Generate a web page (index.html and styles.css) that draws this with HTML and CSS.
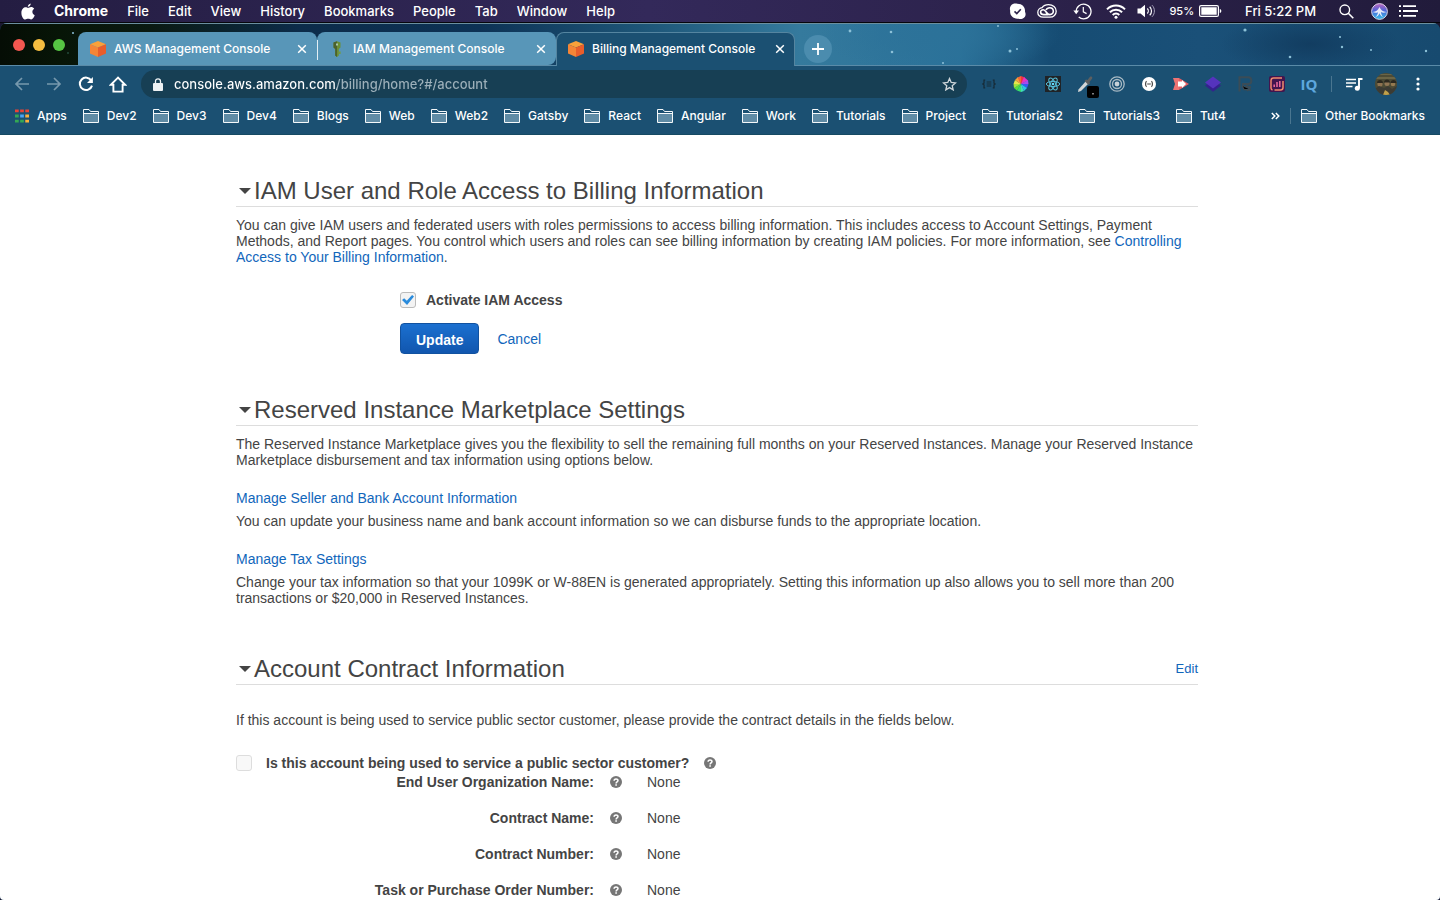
FILE: index.html
```html
<!DOCTYPE html>
<html lang="en">
<head>
<meta charset="utf-8">
<title>Billing Management Console</title>
<link rel="stylesheet" href="styles.css">
</head>
<body>
<svg class="defs" aria-hidden="true">
  <symbol id="folder" viewBox="0 0 16 14"><path d="M1 4.500h14v8.500H1z" fill="#5f8ba5"/><path d="M.5 13.500V.5h5.500l1.500 2h8v11z" fill="none" stroke="#f4f8fa"/><path d="M1 4.500h14" stroke="#f4f8fa"/></symbol>
  <symbol id="cube" viewBox="0 0 16 16"><path d="M8 0l8 3.200L8 6.600 0 3.200z" fill="#f9a13a"/><path d="M0 3.200l8 3.400V16l-8-3.400z" fill="#f58536"/><path d="M16 3.200L8 6.600V16l8-3.400z" fill="#e95d2b"/></symbol>
  <symbol id="close" viewBox="0 0 10 10"><path d="M1.200 1.200l7.600 7.600M8.800 1.200L1.200 8.800" stroke="#fff" stroke-width="1.500" fill="none"/></symbol>
  <symbol id="help" viewBox="0 0 12 12"><circle cx="6" cy="6" r="6" fill="#767676"/><path d="M4.100 4.700c0-2.400 3.900-2.300 3.900-.1C8 6 6.100 5.900 6.100 7.400" fill="none" stroke="#fff" stroke-width="1.500"/><path d="M5.300 8.300h1.600v1.500H5.300z" fill="#fff"/></symbol>
</svg>

<header class="menubar">
  <nav class="menus" aria-label="Menu bar">
    <button class="menu apple" aria-label="Apple"><svg width="14" height="17" viewBox="0 0 14 17"><path d="M9.700.4C9.800 2 8.400 3.900 6.800 3.800 6.600 2.200 8.200.6 9.700.4z" fill="#fff"/><path d="M7 4.900c.8 0 1.700-.8 3.100-.8 1.200 0 2.400.6 3.100 1.700-2.700 1.500-2.300 5.300.5 6.400-.6 1.700-2 4.300-3.500 4.300-1.200 0-1.600-.7-3-.7s-1.800.7-3 .7C2.400 16.500.4 13.200.4 9.900c0-3.700 2.300-5.600 4.300-5.600 1 0 1.800.6 2.300.6z" fill="#fff"/></svg></button>
    <button class="menu app">Chrome</button>
    <button class="menu">File</button>
    <button class="menu">Edit</button>
    <button class="menu">View</button>
    <button class="menu">History</button>
    <button class="menu">Bookmarks</button>
    <button class="menu">People</button>
    <button class="menu">Tab</button>
    <button class="menu">Window</button>
    <button class="menu">Help</button>
  </nav>
  <div class="status">
    <svg width="17" height="17" viewBox="0 0 17 17"><path d="M4.500.8C6 .3 7.500.8 8.500.8c5 0 8 3.700 7.500 8 1 2 .8 4.500-1 6-1.600 1.500-4 1.600-5.500.9-5.600.6-9-3.500-8.300-8C.2 5 1.500 1.700 4.500.8z" fill="#fff"/><path d="M5.500 8.300l2.300 2.200 4-4.300" fill="none" stroke="#2c234c" stroke-width="1.600"/></svg>
    <svg width="20" height="14" viewBox="0 0 20 14"><path d="M6.300 13.200C2.800 13.200.8 11 .8 8.400c0-2.600 2-4.500 4.300-4.700C6.700 1.400 9 .7 11.500.7c4.500 0 7.700 2.800 7.700 6.500 0 3.500-2.700 6-6.200 6z" fill="none" stroke="#fff" stroke-width="1.300"/><path d="M11.500 10.600H6.800c-4.200 0-4.200-4.900-.5-4.900 2.700 0 3.200 4.900 6.500 4.900 4.800 0 4.600-6.900 0-6.900-2 0-3.200 1-3.800 2.300M9 8.200c.9 1.400 1.900 2.400 3.600 2.400" fill="none" stroke="#fff" stroke-width="1.600"/></svg>
    <svg class="history" width="19" height="17" viewBox="0 0 19 17"><path d="M3.200 8.500A7.400 7.400 0 1 1 5.700 14" fill="none" stroke="#fff" stroke-width="1.300"/><path d="M.4 7.500h5.600l-2.800 3.800z" fill="#fff"/><path d="M10.300 4v4.800l3.300 1.800" fill="none" stroke="#fff" stroke-width="1.200"/></svg>
    <svg width="20" height="15" viewBox="0 0 20 15"><path d="M1 5.400a12.500 12.500 0 0 1 18 0M3.900 8.300a8.500 8.500 0 0 1 12.200 0M6.700 11a4.600 4.600 0 0 1 6.600 0" fill="none" stroke="#fff" stroke-width="2"/><circle cx="10" cy="13.300" r="1.500" fill="#fff"/></svg>
    <svg width="18" height="14" viewBox="0 0 18 14"><path d="M.5 4.500h3L8 .8v12.400L3.500 9.500h-3z" fill="#fff"/><path d="M10.300 4.500c1.300 1.300 1.300 3.700 0 5M12.700 2.700c2.400 2.300 2.400 6.300 0 8.600" fill="none" stroke="#fff" stroke-width="1.200"/><path d="M15 1.200c3.200 3.100 3.200 8.500 0 11.600" fill="none" stroke="#a9a4bd" stroke-width="1"/></svg>
    <span class="battery">95% <svg width="23" height="12" viewBox="0 0 23 12"><rect x=".6" y=".6" width="18.800" height="10.800" rx="1.500" fill="none" stroke="#fff" stroke-width="1.200"/><path d="M2.300 2.300h15.400v7.400H2.300zM20.800 4c2 .4 2 3.600 0 4z" fill="#fff"/></svg></span>
    <time class="clock">Fri 5:22 PM</time>
    <svg class="search" width="15" height="15" viewBox="0 0 15 15"><circle cx="5.800" cy="5.800" r="4.800" fill="none" stroke="#fff" stroke-width="1.400"/><path d="M9.300 9.300l5 5" stroke="#fff" stroke-width="1.600"/></svg>
    <svg width="17" height="17" viewBox="0 0 17 17"><defs><linearGradient id="siri" x2="0" y2="1"><stop stop-color="#bd64bd"/><stop offset=".45" stop-color="#4c65d8"/><stop offset="1" stop-color="#36bfe9"/></linearGradient></defs><circle cx="8.500" cy="8.500" r="7.900" fill="url(#siri)" stroke="#d8d2e6"/><path d="M1.500 9c4-.3 5.500-2 7-5 1.300 3 3 4.700 7 5-2.500 1-4.300.7-5.600 0 .4 2.200.9 3.600 2.100 5.200-1.700-.9-2.900-2.200-3.500-4-.7 1.800-2 3.200-4 4C6 12.500 6.800 11 7 9.200 5.600 10 3.800 10 1.500 9z" fill="#fff" fill-opacity=".85"/></svg>
    <svg width="19" height="12" viewBox="0 0 19 12"><path d="M4 1.200h13M4 6h15M4 10.800h13" stroke="#fff" stroke-width="1.800"/><path d="M0 1.200h2M0 6h2M0 10.800h2" stroke="#fff" stroke-width="1.800"/></svg>
  </div>
</header>

<div class="window">
  <div class="tabstrip">
    <svg class="stars" width="1440" height="41" viewBox="0 0 1440 41" aria-hidden="true"><g fill="#8cc1d8"><circle cx="850" cy="7" r="1.400"/><circle cx="891" cy="8" r="1.300"/><circle cx="892" cy="28" r="1.300"/><circle cx="998" cy="2" r="1"/><circle cx="943" cy="39" r="1"/><circle cx="1010" cy="27" r="1.500"/><circle cx="1017" cy="25" r="1"/><circle cx="1245" cy="6" r="1.600"/><circle cx="1290" cy="33" r="1.300"/><circle cx="1340" cy="13" r="1.100"/><circle cx="1342" cy="23" r="1.200"/><circle cx="1371" cy="26" r="1"/><circle cx="1426" cy="27" r="1.200"/><circle cx="73" cy="9" r="1"/></g><circle cx="68" cy="29" r="1" fill="#234a3a"/></svg>
    <div class="lights"><button class="light red" aria-label="Close window"></button><button class="light amber" aria-label="Minimize window"></button><button class="light green" aria-label="Zoom window"></button></div>
    <div class="tab"><svg width="16" height="16"><use href="#cube"/></svg><button class="tab-title">AWS Management Console</button><button class="tab-close" aria-label="Close tab"><svg width="10" height="10"><use href="#close"/></svg></button></div>
    <div class="tab divided"><svg width="16" height="16" viewBox="0 0 16 16"><path d="M4.500 1.500L8 .3l3.500 1.200v5L9.800 8v6.500L8 16l-1.800-1.500V8L4.500 6.500z" fill="#6b8f35"/><path d="M4.500 1.500L8 .3V16l-1.800-1.500V8L4.500 6.500z" fill="#4b612c"/><path d="M7 2.500h2v2H7z" fill="#a7c5ae"/><path d="M9.800 10.500h1.800V13H9.800z" fill="#759c3e"/></svg><button class="tab-title">IAM Management Console</button><button class="tab-close" aria-label="Close tab"><svg width="10" height="10"><use href="#close"/></svg></button></div>
    <div class="tab active"><svg width="16" height="16"><use href="#cube"/></svg><button class="tab-title">Billing Management Console</button><button class="tab-close" aria-label="Close tab"><svg width="10" height="10"><use href="#close"/></svg></button></div>
    <button class="newtab" aria-label="New tab"><svg width="12" height="12" viewBox="0 0 12 12"><path d="M6 0v12M0 6h12" stroke="#fff" stroke-width="1.800"/></svg></button>
  </div>

  <div class="toolbar">
    <button class="tool" aria-label="Back"><svg width="16" height="14" viewBox="0 0 16 14"><path d="M15 7H2M8 1L2 7l6 6" fill="none" stroke="#7799ad" stroke-width="1.700"/></svg></button>
    <button class="tool" aria-label="Forward"><svg width="16" height="14" viewBox="0 0 16 14"><path d="M1 7h13M8 1l6 6-6 6" fill="none" stroke="#7799ad" stroke-width="1.700"/></svg></button>
    <button class="tool" aria-label="Reload"><svg width="16" height="16" viewBox="0 0 16 16"><path d="M13.300 4.500A6.200 6.200 0 1 0 14 9.600" fill="none" stroke="#fff" stroke-width="2"/><path d="M14.900 1v6H9z" fill="#fff"/></svg></button>
    <button class="tool" aria-label="Home"><svg width="18" height="17" viewBox="0 0 18 17"><path d="M9 1.600L1.800 8.800h2.600v6.800h9.200V8.800h2.600z" fill="none" stroke="#fff" stroke-width="1.900"/></svg></button>
    <div class="omnibox">
      <svg width="10" height="13" viewBox="0 0 10 13"><path d="M1 5h8a1 1 0 0 1 1 1v6a1 1 0 0 1-1 1H1a1 1 0 0 1-1-1V6a1 1 0 0 1 1-1z" fill="#eef2f4"/><path d="M2.500 5.500V3.300a2.500 2.500 0 0 1 5 0v2.200" fill="none" stroke="#eef2f4" stroke-width="1.300"/></svg>
      <input class="url" type="text" aria-label="Address" value="console.aws.amazon.com/billing/home?#/account">
      <button class="star" aria-label="Bookmark this page"><svg width="15" height="14" viewBox="0 0 15 14"><path d="M7.500 1.500l1.700 4 4.300.4-3.300 2.800 1 4.200-3.700-2.300-3.700 2.300 1-4.200L1.500 5.900l4.300-.4z" fill="none" stroke="#cfd6da" stroke-width="1.300"/></svg></button>
    </div>
    <button class="tool" aria-label="JSON extension"><svg width="14" height="10" viewBox="0 0 14 10"><path d="M3.200 1.200H2v3L.8 5 2 5.800v3h1.200M10.800 1.200H12v3l1.200.8-1.200.8v3h-1.200" fill="none" stroke="#172c39" stroke-width="1.300"/><path d="M4.700 3h4.600M4.700 5h4.600M4.700 7h4.600" stroke="#172c39" stroke-width="1"/></svg></button>
    <button class="tool" aria-label="Color wheel"><svg width="16" height="16" viewBox="0 0 16 16"><path d="M8 8V0l4 1.500z" fill="#ef3340"/><path d="M8 8l3-7 4 3.500z" fill="#e533c6"/><path d="M8 8l7-4 .5 4z" fill="#a64cf0"/><path d="M8 8h7.500l-1.500 4z" fill="#395af0"/><path d="M8 8l6 4-3 3z" fill="#2dc4e8"/><path d="M8 8l3 7-3 1z" fill="#42dfb7"/><path d="M8 8v8l-4-1.500z" fill="#39dd6c"/><path d="M8 8l-4 6.500L1 12z" fill="#56df3f"/><path d="M8 8l-7 4-.5-4z" fill="#a3e33d"/><path d="M8 8H.5L2 4z" fill="#e8e44b"/><path d="M8 8L2 4l3-3z" fill="#f6a13b"/><path d="M8 8L4.500 1.500 8 0z" fill="#f56734"/></svg></button>
    <button class="tool" aria-label="React tools"><svg width="16" height="16" viewBox="0 0 16 16"><path d="M0 0h16v16H0z" fill="#202326"/><g fill="none" stroke="#56bfda"><ellipse cx="8" cy="8" rx="6.700" ry="2.600"/><ellipse cx="8" cy="8" rx="6.700" ry="2.600" transform="rotate(60 8 8)"/><ellipse cx="8" cy="8" rx="6.700" ry="2.600" transform="rotate(120 8 8)"/></g><circle cx="8" cy="8" r="1.300" fill="#61dafb"/></svg></button>
    <button class="tool picker" aria-label="Color picker"><svg width="22" height="22" viewBox="0 0 22 22"><path d="M1.500 13.500L9 5l2.500 2.500L4 15l-3 1z" fill="#d4d6d6"/><path d="M9 3.500l1.500.5L13 .8c1.500-1 3 .5 2 2L12.500 6l.5 1.500-1.500 1.500-4-4z" fill="#5d5f60"/><rect x="10" y="10" width="12" height="12" rx="2" fill="#000"/><path d="M15.500 17h1v1.500h-1z" fill="#fff"/></svg></button>
    <button class="tool" aria-label="Target"><svg width="16" height="16" viewBox="0 0 16 16"><g fill="none" stroke="#a9bac4" stroke-width="1.300"><circle cx="8" cy="8" r="7.200"/><circle cx="8" cy="8" r="4.500"/></g><circle cx="8" cy="8" r="2.400" fill="#c8d2d8"/></svg></button>
    <button class="tool" aria-label="Formatter"><svg width="14" height="14" viewBox="0 0 14 14"><circle cx="7" cy="7" r="7" fill="#fff"/><path d="M4.700 4.200c-1.500.5-1.500 5.100 0 5.600M9.300 4.200c1.500.5 1.500 5.100 0 5.600M5.200 7h3.600" stroke="#444" stroke-width="1.200" fill="none"/></svg></button>
    <button class="tool" aria-label="Recorder"><svg width="16" height="12" viewBox="0 0 16 12"><path d="M0 0h6v12H0l2-6z" fill="#ee7373"/><path d="M6 0l10 6-10 6z" fill="#e65f64"/><path d="M5 3.500h4V2l4 4-4 4V8.500H5z" fill="#fff"/></svg></button>
    <button class="tool" aria-label="Layers"><svg width="16" height="16" viewBox="0 0 16 16"><path d="M0 9.500l8 6.300 8-6.300-8-5z" fill="#35218e"/><path d="M0 6.500L8 .5l8 6-8 6z" fill="#5533bd"/></svg></button>
    <button class="tool" aria-label="Cart"><svg width="15" height="16" viewBox="0 0 15 16"><path d="M1.500 15.500V1.300h8.700c4.200 0 4.200 6.700 0 6.700H5v3h8" fill="none" stroke="#3a4c57" stroke-width="2"/><path d="M4 10l2 3.500 7 .5M8 8l4 5M12.500 11L9 15" stroke="#3a4c57" stroke-width="1.500"/></svg></button>
    <button class="tool" aria-label="Analytics"><svg width="16" height="16" viewBox="0 0 16 16"><rect width="16" height="16" rx="2" fill="#42154f"/><path d="M3.500 14A2 2 0 0 1 2 12V4.500A2.500 2.500 0 0 1 4.500 2H13M14 5v6.500a2.500 2.500 0 0 1-2.500 2.500H5.500" fill="none" stroke="#f18a6c" stroke-width="1.500"/><path d="M5.200 11V8.500M8 11V6M10.800 11V5" stroke="#ee6b9d" stroke-width="1.500"/></svg></button>
    <button class="tool iq">IQ</button>
    <span class="rule"></span>
    <button class="tool" aria-label="Media controls"><svg width="17" height="13" viewBox="0 0 17 13"><path d="M0 1.500h10M0 5h10M0 8.500h6.500" stroke="#fff" stroke-width="1.700"/><path d="M13 10V1h3.500" stroke="#fff" stroke-width="1.900" fill="none"/><circle cx="11.300" cy="10.300" r="2.500" fill="#fff"/></svg></button>
    <button class="tool" aria-label="Profile"><svg width="22" height="22" viewBox="0 0 22 22"><clipPath id="round"><circle cx="11" cy="11" r="11"/></clipPath><g clip-path="url(#round)"><path d="M0 0h22v22H0z" fill="#4d4b35"/><path d="M0 4h22v2H0zM2 1h15v1H2z" fill="#6b6546"/><circle cx="5" cy="11" r="2.600" fill="#8d7250"/><circle cx="12" cy="10.500" r="2.500" fill="#917654"/><circle cx="18" cy="11" r="2.300" fill="#947950"/><path d="M2 10c0-4 6-4 6 0zM9 9.500c0-4 6-4 6 0zM15.500 10c0-4 6-4 6 0z" fill="#2c2920"/><path d="M0 22v-6l4-3 5 2 4-2 4 3 5-3v9z" fill="#3c3b33"/><path d="M8 22l2-5 3 2 2 3z" fill="#c0a04a"/></g></svg></button>
    <button class="tool" aria-label="Chrome menu"><svg width="4" height="14" viewBox="0 0 4 14"><g fill="#fff"><circle cx="2" cy="2" r="1.600"/><circle cx="2" cy="7" r="1.600"/><circle cx="2" cy="12" r="1.600"/></g></svg></button>
  </div>

  <nav class="bookmarks" aria-label="Bookmarks">
    <a class="mark" href="#"><svg width="14" height="14" viewBox="0 0 15 14"><g><path d="M0 0h4v3H0zM5.500 0h4v3h-4zM11 0h4v3h-4z" fill="#ea4335"/><path d="M0 5.500h4v3H0z" fill="#34a853"/><path d="M5.500 5.500h4v3h-4z" fill="#4aa3f5"/><path d="M11 5.500h4v3h-4z" fill="#fbb03b"/><path d="M0 11h4v3H0zM5.500 11h4v3h-4z" fill="#34a853"/><path d="M11 11h4v3h-4z" fill="#fbb03b"/></g></svg>Apps</a>
    <a class="mark" href="#"><svg width="16" height="14"><use href="#folder"/></svg>Dev2</a>
    <a class="mark" href="#"><svg width="16" height="14"><use href="#folder"/></svg>Dev3</a>
    <a class="mark" href="#"><svg width="16" height="14"><use href="#folder"/></svg>Dev4</a>
    <a class="mark" href="#"><svg width="16" height="14"><use href="#folder"/></svg>Blogs</a>
    <a class="mark" href="#"><svg width="16" height="14"><use href="#folder"/></svg>Web</a>
    <a class="mark" href="#"><svg width="16" height="14"><use href="#folder"/></svg>Web2</a>
    <a class="mark" href="#"><svg width="16" height="14"><use href="#folder"/></svg>Gatsby</a>
    <a class="mark" href="#"><svg width="16" height="14"><use href="#folder"/></svg>React</a>
    <a class="mark" href="#"><svg width="16" height="14"><use href="#folder"/></svg>Angular</a>
    <a class="mark" href="#"><svg width="16" height="14"><use href="#folder"/></svg>Work</a>
    <a class="mark" href="#"><svg width="16" height="14"><use href="#folder"/></svg>Tutorials</a>
    <a class="mark" href="#"><svg width="16" height="14"><use href="#folder"/></svg>Project</a>
    <a class="mark" href="#"><svg width="16" height="14"><use href="#folder"/></svg>Tutorials2</a>
    <a class="mark" href="#"><svg width="16" height="14"><use href="#folder"/></svg>Tutorials3</a>
    <a class="mark" href="#"><svg width="16" height="14"><use href="#folder"/></svg>Tut4</a>
    <button class="more" aria-label="More bookmarks"><svg width="9" height="8" viewBox="0 0 9 8"><path d="M.8 1l3 3-3 3M4.800 1l3 3-3 3" fill="none" stroke="#fff" stroke-width="1.500"/></svg></button>
    <a class="mark other" href="#"><svg width="16" height="14"><use href="#folder"/></svg>Other Bookmarks</a>
  </nav>

  <main class="page">
    <div class="content">
      <section class="section">
        <div class="heading"><h2><button class="toggle"><span class="caret"></span>IAM User and Role Access to Billing Information</button></h2></div>
        <p>You can give IAM users and federated users with roles permissions to access billing information. This includes access to Account Settings, Payment Methods, and Report pages. You control which users and roles can see billing information by creating IAM policies. For more information, see <a href="#">Controlling Access to Your Billing Information</a>.</p>
        <form class="iam">
          <label class="check"><input type="checkbox" checked>Activate IAM Access</label>
          <div class="actions"><button type="button" class="update">Update</button><a class="cancel" href="#">Cancel</a></div>
        </form>
      </section>

      <section class="section">
        <div class="heading"><h2><button class="toggle"><span class="caret"></span>Reserved Instance Marketplace Settings</button></h2></div>
        <p>The Reserved Instance Marketplace gives you the flexibility to sell the remaining full months on your Reserved Instances. Manage your Reserved Instance Marketplace disbursement and tax information using options below.</p>
        <a class="sublink" href="#">Manage Seller and Bank Account Information</a>
        <p>You can update your business name and bank account information so we can disburse funds to the appropriate location.</p>
        <a class="sublink" href="#">Manage Tax Settings</a>
        <p>Change your tax information so that your 1099K or W-88EN is generated appropriately. Setting this information up also allows you to sell more than 200 transactions or $20,000 in Reserved Instances.</p>
      </section>

      <section class="section contract">
        <div class="heading"><h2><button class="toggle"><span class="caret"></span>Account Contract Information</button></h2><a class="edit" href="#">Edit</a></div>
        <p class="intro">If this account is being used to service public sector customer, please provide the contract details in the fields below.</p>
        <div class="public"><label class="check wide-gap"><input type="checkbox" disabled>Is this account being used to service a public sector customer?</label><svg width="12" height="12"><use href="#help"/></svg></div>
        <dl class="fields">
          <dt>End User Organization Name:</dt><dd><svg width="12" height="12"><use href="#help"/></svg>None</dd>
          <dt>Contract Name:</dt><dd><svg width="12" height="12"><use href="#help"/></svg>None</dd>
          <dt>Contract Number:</dt><dd><svg width="12" height="12"><use href="#help"/></svg>None</dd>
          <dt>Task or Purchase Order Number:</dt><dd><svg width="12" height="12"><use href="#help"/></svg>None</dd>
        </dl>
      </section>
    </div>
  </main>
</div>
</body>
</html>
```
FILE: styles.css
```css
* { box-sizing: border-box; }
body {
  margin: 0;
  height: 100vh;
  overflow: hidden;
  display: flex;
  flex-direction: column;
  background: #1b1730;
  color: #444;
  font: 14px/16px "Liberation Sans", Arial, sans-serif;
}
button {
  border: 0;
  padding: 0;
  background: none;
  color: inherit;
  font: inherit;
}
svg { display: block; flex: none; }
a { color: #1166bb; text-decoration: none; }
.defs { position: absolute; width: 0; height: 0; }

/* System menu bar */
.menubar {
  flex: none;
  display: flex;
  justify-content: space-between;
  height: 23px;
  padding: 0 22px 0 21px;
  border-bottom: 1px solid #06060c;
  background: linear-gradient(90deg, #241d42, #33295a 45%, #2b2149 75%, #211b3b);
  color: #fff;
  font: 500 13px/22px Inter, sans-serif;
}
.menus { display: flex; align-items: center; gap: 19px; }
.menu.app { font-size: 14px; font-weight: 700; }
.status { display: flex; align-items: center; gap: 11px; }
.history { margin: 0 3px 0 5px; }
.battery { display: flex; align-items: center; gap: 5px; margin-left: 3px; font-size: 11px; }
.clock { margin: 0 12px 0 12px; }
.search { margin-right: 6px; }

/* Browser window */
.window {
  flex: 1;
  min-height: 0;
  display: flex;
  flex-direction: column;
  overflow: hidden;
  border-radius: 7px 7px 4px 4px;
  background: #1b5072;
  color: #fff;
  font: 500 12px/16px Inter, sans-serif;
}
.tabstrip {
  flex: none;
  position: relative;
  display: flex;
  align-items: flex-end;
  height: 43px;
  border-top: 1px solid #6b8f9f;
  border-bottom: 1px solid #5a8ba8;
  background:
    radial-gradient(ellipse 120px 40px at 940px 10px, #2c7299, transparent),
    radial-gradient(ellipse 90px 30px at 1310px 20px, #123d61, transparent),
    linear-gradient(90deg, #050d05, #071507 60px, #0a1a12 150px, #0c2c4a 300px, #0d3255 480px, #1d5577 640px, #357a9d 800px, #2a7199 960px, #164c73 1050px, #1a5078 1200px, #174a6f 1440px);
}
.stars { position: absolute; left: 0; top: 0; }
.lights { flex: none; display: flex; align-items: center; align-self: center; gap: 8px; width: 78px; padding-left: 13px; }
.light { width: 12px; height: 12px; border-radius: 50%; }
.red { background: #f35750; }
.amber { background: #f5bd40; }
.green { background: #56c443; }
.tab {
  position: relative;
  flex: 0 1 239px;
  display: flex;
  align-items: center;
  height: 33px;
  padding: 0 10px 0 12px;
  border-radius: 8px 8px 0 0;
  background: #5896b8;
}
.tab.divided { border-radius: 8px 8px 8px 0; }
.tab.divided::before { content: ""; position: absolute; left: 0; top: 8px; width: 1px; height: 20px; background: #e2eef4; }
.tab.active { height: 34px; margin-bottom: -1px; border: 1px solid #5585a0; border-bottom: 0; background: #1b5072; padding: 0 9px 2px 11px; }
.tab-title { flex: 1; min-width: 0; margin-left: 8px; text-align: left; white-space: nowrap; }
.newtab { position: relative; display: grid; place-items: center; width: 28px; height: 28px; margin: 0 0 2px 9px; border-radius: 50%; background: #4b8cae; }

.toolbar { flex: none; display: flex; align-items: center; height: 36px; padding: 0 6px; }
.tool { flex: none; display: grid; place-items: center; width: 32px; height: 32px; }
.picker { padding: 5px 0 0 5px; }
.iq { color: #5ea7dd; font: 700 15px/20px "Open Sans", sans-serif; }
.rule { width: 1px; height: 16px; margin: 0 6px 0 6px; background: #4a7690; }
.omnibox {
  flex: 1;
  min-width: 0;
  display: flex;
  align-items: center;
  height: 28px;
  margin: 0 6px 0 7px;
  padding: 0 10px 0 12px;
  border-radius: 14px;
  background: #173f54;
}
.url {
  flex: 1;
  min-width: 0;
  margin-left: 11px;
  padding: 0;
  border: 0;
  outline: 0;
  background: linear-gradient(90deg, #fff 163px, #9db0ba 163px);
  -webkit-background-clip: text;
  background-clip: text;
  -webkit-text-fill-color: transparent;
  font: 500 13px/20px Inter, sans-serif;
}

.bookmarks {
  flex: none;
  display: flex;
  align-items: center;
  gap: 16px;
  height: 33px;
  padding: 0 15px 4px;
  border-bottom: 1px solid #164a63;
}
.mark { display: flex; align-items: center; gap: 8px; color: #fff; white-space: nowrap; }
.more { margin-left: auto; }
.other { margin-left: -6px; padding-left: 10px; border-left: 1px solid #4a7690; }

/* Page */
.page {
  flex: 1;
  min-height: 0;
  overflow: hidden;
  padding: 40px 6px 0 0;
  background: #fff;
  color: #444;
  font: 14px/16px "Liberation Sans", Arial, sans-serif;
}
.content { max-width: 962px; margin: 0 auto; }
p { margin: 0; }
.heading {
  display: flex;
  align-items: center;
  justify-content: space-between;
  height: 32px;
  margin-bottom: 10px;
  border-bottom: 1px solid #ddd;
}
h2 { margin: 0; font-size: 24px; line-height: 28px; font-weight: 400; }
.toggle { display: flex; align-items: center; gap: 3px; }
.caret { margin-left: 3px; border: 6px solid transparent; border-top-color: #444; border-bottom: 0; }
.edit { font-size: 13px; }
.iam { padding: 27px 0 40px 164px; }
.check { display: flex; align-items: center; gap: 10px; font-weight: 700; }
.check.wide-gap { gap: 14px; }
.check input {
  appearance: none;
  flex: none;
  display: grid;
  place-items: center;
  width: 16px;
  height: 16px;
  margin: 0;
  border: 1px solid #bbb;
  border-radius: 3px;
  background: #f3f3f3;
}
.check input:checked::before {
  content: "";
  width: 12px;
  height: 10px;
  background: #2a8bdc;
  clip-path: polygon(0 50%, 18% 32%, 40% 58%, 84% 0, 100% 16%, 42% 100%);
}
.check input:disabled { border-color: #ddd; background: #f8f8f8; }
.actions { display: flex; align-items: center; gap: 18px; margin-top: 15px; }
.update {
  height: 31px;
  padding: 3px 15px 0;
  border: 1px solid #1152a0;
  border-radius: 4px;
  background: linear-gradient(#1b70d0, #1156ae);
  color: #fff;
  font-weight: 700;
}
.sublink { display: block; width: fit-content; margin: 22px 0 7px; }
.contract { padding-top: 47px; }
.intro { padding: 17px 0 27px; }
.public { display: flex; align-items: center; gap: 15px; }
.fields { display: grid; grid-template-columns: 358px 1fr; row-gap: 20px; margin: 3px 0 0; }
.fields dt { text-align: right; font-weight: 700; }
.fields dd { display: flex; align-items: center; gap: 25px; margin: 0 0 0 16px; }
```
